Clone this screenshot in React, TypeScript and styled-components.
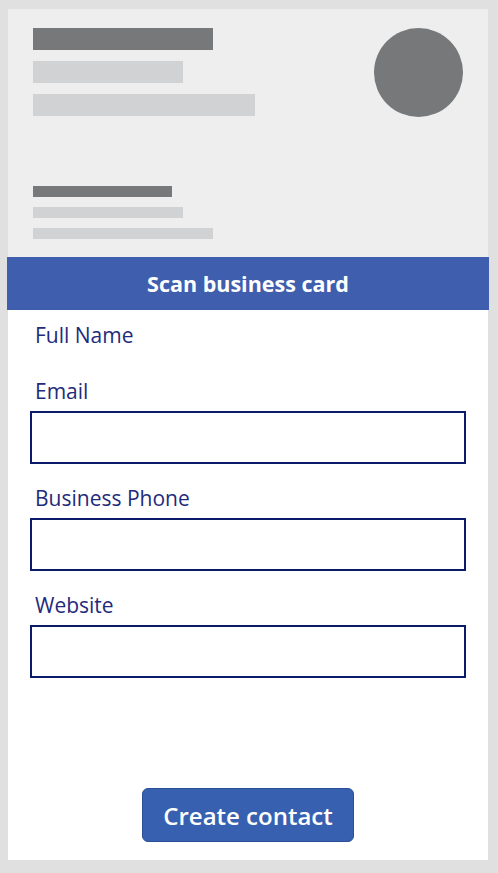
import styled, { createGlobalStyle } from "styled-components";

const GlobalStyle = createGlobalStyle`
  html, body {
    margin: 0;
    padding: 0;
    background: #e0e0e0;
  }
  body {
    font-family: "Open Sans", "Liberation Sans", sans-serif;
  }
`;

const Page = styled.div`
  padding: 9px 10px 12px 8px;
  width: 480px;
`;

const Card = styled.div`
  height: 851px;
  background: #fff;
  display: flex;
  flex-direction: column;
`;

const Preview = styled.div`
  height: 248px;
  box-sizing: border-box;
  padding: 19px 25px 18px 25px;
  background: #eeeeee;
  display: flex;
  justify-content: space-between;
`;

const PreviewLines = styled.div`
  display: flex;
  flex-direction: column;
  justify-content: space-between;
`;

const LineGroup = styled.div<{ $gap: number }>`
  display: flex;
  flex-direction: column;
  gap: ${(p) => p.$gap}px;
`;

const Bar = styled.div<{ $w: number; $h: number; $dark?: boolean }>`
  width: ${(p) => p.$w}px;
  height: ${(p) => p.$h}px;
  background: ${(p) => (p.$dark ? "#77787a" : "#d1d2d4")};
`;

const Avatar = styled.div`
  width: 89px;
  height: 89px;
  border-radius: 50%;
  background: #77787a;
`;

const ScanBar = styled.div`
  height: 53px;
  margin: 0 -1px;
  background: #3f5fae;
  color: #fff;
  display: flex;
  align-items: center;
  justify-content: center;
  font-size: 21.5px;
  font-weight: 700;
`;

const Form = styled.div`
  flex: 1;
  display: flex;
  flex-direction: column;
  padding: 13px 22px 18px 22px;
`;

const Field = styled.div`
  display: flex;
  flex-direction: column;
  gap: 8px;
  margin-bottom: 22px;
`;

const NameLabel = styled.div`
  margin-bottom: 32px;
`;

const Label = styled.label`
  display: block;
  padding-left: 5px;
  font-size: 21px;
  line-height: 24px;
  color: #1f2b7c;
`;

const Input = styled.input`
  box-sizing: border-box;
  width: 436px;
  height: 53px;
  margin: 0;
  border: 2px solid #0c1a6c;
  border-radius: 0;
  background: #fff;
  outline: none;
`;

const Footer = styled.div`
  margin-top: auto;
  display: flex;
  justify-content: center;
`;

const CreateButton = styled.button`
  width: 212px;
  height: 54px;
  border: 1px solid #2b4f95;
  border-radius: 6px;
  background: #3761b0;
  color: #fff;
  font-family: "Open Sans", "Liberation Sans", sans-serif;
  font-size: 24px;
  font-weight: 600;
  cursor: pointer;
`;

const fields = ["Email", "Business Phone", "Website"];

export default function App() {
  return (
    <>
      <GlobalStyle />
      <Page>
        <Card>
          <Preview>
            <PreviewLines>
              <LineGroup $gap={11}>
                <Bar $w={180} $h={22} $dark />
                <Bar $w={150} $h={22} />
                <Bar $w={222} $h={22} />
              </LineGroup>
              <LineGroup $gap={10}>
                <Bar $w={139} $h={11} $dark />
                <Bar $w={150} $h={11} />
                <Bar $w={180} $h={11} />
              </LineGroup>
            </PreviewLines>
            <Avatar />
          </Preview>
          <ScanBar>Scan business card</ScanBar>
          <Form>
            <NameLabel>
              <Label>Full Name</Label>
            </NameLabel>
            {fields.map((f) => (
              <Field key={f}>
                <Label>{f}</Label>
                <Input type="text" />
              </Field>
            ))}
            <Footer>
              <CreateButton>Create contact</CreateButton>
            </Footer>
          </Form>
        </Card>
      </Page>
    </>
  );
}
